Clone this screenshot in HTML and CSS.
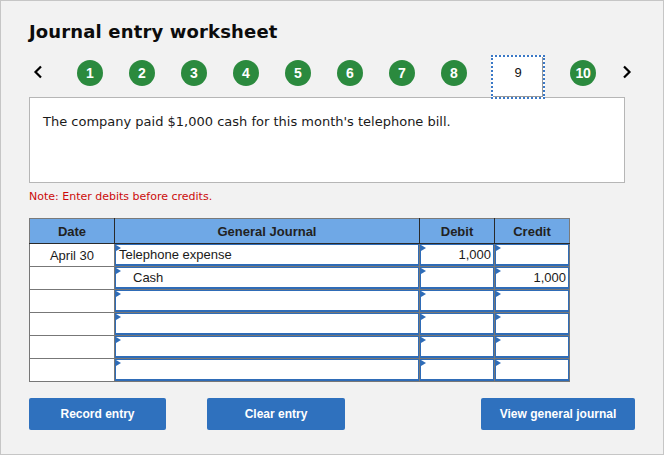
FILE: index.html
```html
<!DOCTYPE html>
<html>
<head>
<meta charset="utf-8">
<link rel="stylesheet" href="styles.css">
</head>
<body>
<div class="page">
  <h1 class="title">Journal entry worksheet</h1>
  <div class="nav">
    <span class="chev chev-l"><svg width="10" height="14" viewBox="0 0 10 14"><polyline points="8,1.5 2.5,7 8,12.5" fill="none" stroke="#000" stroke-width="2.2"/></svg></span>
    <span class="step first">1</span>
    <span class="step">2</span>
    <span class="step">3</span>
    <span class="step">4</span>
    <span class="step">5</span>
    <span class="step">6</span>
    <span class="step">7</span>
    <span class="step">8</span>
    <span class="current">9</span>
    <span class="step last">10</span>
    <span class="chev chev-r"><svg width="10" height="14" viewBox="0 0 10 14"><polyline points="2,1.5 7.5,7 2,12.5" fill="none" stroke="#000" stroke-width="2.2"/></svg></span>
  </div>
  <div class="prompt">The company paid $1,000 cash for this month's telephone bill.</div>
  <p class="note">Note: Enter debits before credits.</p>
  <table class="journal">
    <colgroup>
      <col class="c-date"><col class="c-gj"><col class="c-amt"><col class="c-amt">
    </colgroup>
    <thead>
      <tr><th>Date</th><th>General Journal</th><th>Debit</th><th>Credit</th></tr>
    </thead>
    <tbody>
      <tr>
        <td class="date">April 30</td>
        <td class="in"><div class="field"><span class="tri"></span><span class="val">Telephone expense</span></div></td>
        <td class="in"><div class="field num"><span class="tri"></span><span class="val">1,000</span></div></td>
        <td class="in"><div class="field num"><span class="tri"></span><span class="val"></span></div></td>
      </tr>
      <tr>
        <td class="date"></td>
        <td class="in"><div class="field indent"><span class="tri"></span><span class="val">Cash</span></div></td>
        <td class="in"><div class="field num"><span class="tri"></span><span class="val"></span></div></td>
        <td class="in"><div class="field num"><span class="tri"></span><span class="val">1,000</span></div></td>
      </tr>
      <tr>
        <td class="date"></td>
        <td class="in"><div class="field"><span class="tri"></span></div></td>
        <td class="in"><div class="field"><span class="tri"></span></div></td>
        <td class="in"><div class="field"><span class="tri"></span></div></td>
      </tr>
      <tr>
        <td class="date"></td>
        <td class="in"><div class="field"><span class="tri"></span></div></td>
        <td class="in"><div class="field"><span class="tri"></span></div></td>
        <td class="in"><div class="field"><span class="tri"></span></div></td>
      </tr>
      <tr>
        <td class="date"></td>
        <td class="in"><div class="field"><span class="tri"></span></div></td>
        <td class="in"><div class="field"><span class="tri"></span></div></td>
        <td class="in"><div class="field"><span class="tri"></span></div></td>
      </tr>
      <tr>
        <td class="date"></td>
        <td class="in"><div class="field"><span class="tri"></span></div></td>
        <td class="in"><div class="field"><span class="tri"></span></div></td>
        <td class="in"><div class="field"><span class="tri"></span></div></td>
      </tr>
    </tbody>
  </table>
  <div class="actions">
    <button class="btn btn-record">Record entry</button>
    <button class="btn btn-clear">Clear entry</button>
    <button class="btn btn-view">View general journal</button>
  </div>
</div>
</body>
</html>
```
FILE: styles.css
```css
html, body {
  margin: 0;
  padding: 0;
}
body {
  width: 664px;
  height: 455px;
  overflow: hidden;
}
.page {
  box-sizing: border-box;
  width: 664px;
  height: 455px;
  border: 1px solid #c6c6c6;
  background: #f2f2f2;
  padding: 20px 28px 0 28px;
  font-family: "DejaVu Sans", Verdana, sans-serif;
  color: #111;
}
.title {
  margin: 0;
  font-size: 18px;
  line-height: 22px;
  font-weight: bold;
  letter-spacing: 0.15px;
  color: #0c0c0c;
}
.nav {
  display: flex;
  align-items: flex-start;
  margin-top: 12px;
  margin-bottom: -2px;
  height: 44px;
}
.chev {
  display: block;
  width: 10px;
  height: 14px;
  margin-top: 10px;
}
.chev svg { display: block; }
.chev-l { margin-left: 4px; }
.chev-r { margin-left: 26px; }
.step {
  width: 26px;
  height: 26px;
  border-radius: 50%;
  background: #2b8a3e;
  color: #fff;
  font: bold 14px/26px "Liberation Sans", Arial, sans-serif;
  text-align: center;
  margin-top: 5px;
  margin-left: 26px;
  flex: none;
}
.step.first { margin-left: 34px; }
.step.last { margin-left: 25px; letter-spacing: -0.3px; }
.current {
  position: relative;
  z-index: 1;
  box-sizing: border-box;
  width: 54px;
  height: 44px;
  margin-left: 24px;
  border: 2px dotted #3a78c6;
  background: #fff;
  box-shadow: inset -1px -1px 0 #9a9a9a;
  font: 13px/32px "Liberation Sans", Arial, sans-serif;
  color: #111;
  text-align: center;
  flex: none;
}
.prompt {
  box-sizing: border-box;
  width: 596px;
  height: 86px;
  border: 1px solid #b6b6b6;
  background: #fff;
  padding: 16px 13px 0 13px;
  font-size: 13px;
  line-height: 16px;
  color: #1a1a1a;
}
.note {
  margin: 7px 0 0 0;
  font-size: 11px;
  line-height: 14px;
  color: #cc0b0b;
}
.journal {
  margin-top: 14px;
  border-collapse: collapse;
  table-layout: fixed;
  width: 541px;
  font: 13px "Liberation Sans", Arial, sans-serif;
  color: #1a1a1a;
}
.c-date { width: 85px; }
.c-gj { width: 305px; }
.c-amt { width: 75px; }
.journal th {
  height: 24px;
  padding: 0;
  background: #6fa8e6;
  border: 1px solid #2a2a2a;
  border-top-color: #7a7a7a;
  font-weight: bold;
  color: #222;
  text-align: center;
}
.journal th:first-child { border-left-color: #7a7a7a; }
.journal th:last-child { border-right-color: #7a7a7a; }
.journal td {
  height: 22px;
  padding: 0;
  border: 1px solid #777;
  background: #fff;
}
.journal thead + tbody tr:first-child td { border-top-color: #2a2a2a; }
.journal td.date {
  text-align: center;
}
.field {
  position: relative;
  box-sizing: border-box;
  height: 22px;
  border: 1px solid #2f6cb7;
  border-bottom-width: 2px;
  display: flex;
  align-items: center;
  padding: 0 3px;
  background: #fff;
}
.field.indent { padding-left: 17px; }
.field.num { justify-content: flex-end; padding-right: 2px; }
.tri {
  position: absolute;
  left: 0;
  top: 0;
  width: 0;
  height: 0;
  border-left: 5px solid #2f6cb7;
  border-top: 3px solid transparent;
  border-bottom: 3px solid transparent;
}
.actions {
  display: flex;
  margin-top: 16px;
}
.btn {
  height: 32px;
  border: none;
  border-radius: 2px;
  background: #2f71be;
  color: #fff;
  font: bold 12px "Liberation Sans", Arial, sans-serif;
  padding: 0;
  cursor: pointer;
}
.btn-record { width: 137px; }
.btn-clear { width: 138px; margin-left: 41px; }
.btn-view { width: 154px; margin-left: auto; }
```
